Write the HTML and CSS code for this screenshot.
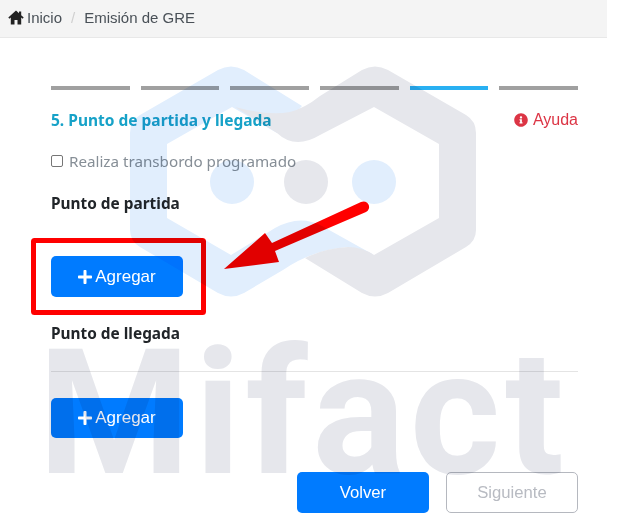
FILE: index.html
```html
<!DOCTYPE html>
<html lang="es">
<head>
  <meta charset="utf-8">
  <title>Emisión de GRE</title>
  <link rel="stylesheet" href="styles.css">
</head>
<body>
<div class="page">
  <nav class="crumbs">
    <svg class="crumbs__home" viewBox="0 0 16 15"><path d="M8 .6 L.3 7.6 L1.4 8.8 L2.8 7.6 V14.4 H6.5 V10 H9.5 V14.4 H13.2 V7.6 L14.6 8.8 L15.7 7.6 L13.2 5.3 V1.4 H11 V3.3 Z"/></svg>
    <span class="crumbs__link">Inicio</span>
    <span class="crumbs__sep">/</span>
    <span class="crumbs__current">Emisión de GRE</span>
  </nav>

  <main class="wizard">
    <div class="steps">
      <span class="steps__bar"></span>
      <span class="steps__bar"></span>
      <span class="steps__bar"></span>
      <span class="steps__bar"></span>
      <span class="steps__bar steps__bar--active"></span>
      <span class="steps__bar"></span>
    </div>

    <div class="wizard__head">
      <h2 class="wizard__title">5. Punto de partida y llegada</h2>
      <span class="help">
        <svg class="help__icon" viewBox="0 0 512 512"><path d="M256 8C119.043 8 8 119.083 8 256c0 136.997 111.043 248 248 248s248-111.003 248-248C504 119.083 392.957 8 256 8zm0 110c23.196 0 42 18.804 42 42s-18.804 42-42 42-42-18.804-42-42 18.804-42 42-42zm56 254c0 6.627-5.373 12-12 12h-88c-6.627 0-12-5.373-12-12v-24c0-6.627 5.373-12 12-12h12v-64h-12c-6.627 0-12-5.373-12-12v-24c0-6.627 5.373-12 12-12h64c6.627 0 12 5.373 12 12v100h12c6.627 0 12 5.373 12 12v24z"/></svg>
        Ayuda
      </span>
    </div>

    <label class="check">
      <span class="check__box"></span>
      Realiza transbordo programado
    </label>

    <h3 class="section section--from">Punto de partida</h3>
    <button class="btn btn--add btn--first">
      <svg class="btn__plus" viewBox="0 0 448 512"><path d="M416 208H272V64c0-17.67-14.33-32-32-32h-32c-17.67 0-32 14.33-32 32v144H32c-17.67 0-32 14.33-32 32v32c0 17.67 14.33 32 32 32h144v144c0 17.67 14.33 32 32 32h32c17.67 0 32-14.33 32-32V304h144c17.67 0 32-14.33 32-32v-32c0-17.67-14.33-32-32-32z"/></svg>
      Agregar
    </button>

    <h3 class="section section--to">Punto de llegada</h3>
    <hr class="rule">
    <button class="btn btn--add btn--second">
      <svg class="btn__plus" viewBox="0 0 448 512"><path d="M416 208H272V64c0-17.67-14.33-32-32-32h-32c-17.67 0-32 14.33-32 32v144H32c-17.67 0-32 14.33-32 32v32c0 17.67 14.33 32 32 32h144v144c0 17.67 14.33 32 32 32h32c17.67 0 32-14.33 32-32V304h144c17.67 0 32-14.33 32-32v-32c0-17.67-14.33-32-32-32z"/></svg>
      Agregar
    </button>

    <div class="wizard__foot">
      <button class="btn btn--nav">Volver</button>
      <button class="btn btn--nav btn--off">Siguiente</button>
    </div>
  </main>
</div>

<!-- red marks drawn on top of the screenshot -->
<svg class="layer" viewBox="0 0 625 529">
  <rect class="mark-box" x="33.5" y="240.5" width="170" height="72" rx="1"/>
  <path class="mark-arrow" d="M224 269 L265 233 L272 243 L361 202 A5.5 5.5 0 0 1 366 212 L275 251 L279 262 Z"/>
</svg>

<!-- watermark sits over everything, it tints what is below it -->
<svg class="layer watermark" viewBox="0 0 625 529">
  <path class="wm-blue" d="M302 106 L244 70 Q231 63 218 70 L140 115 Q130 121 130 133 L130 230 Q130 241 140 247 L218 293 Q231 300 244 293 L283 270 Q312 250 348 247 L374 255 L322 226 Q300 214 275 228 L231 255 L167 218 L167 144 L232 107 L277 133 Z"/>
  <path class="wm-grey" d="M235 107 Q268 116 290 112 Q305 108 320 96 L362 70 Q375 63 388 70 L466 115 Q476 121 476 133 L476 230 Q476 241 466 247 L388 293 Q375 300 362 293 L305 258 Q325 248 348 247 Q362 247 374 255 L439 218 L439 144 L374 107 L320 135 Q295 150 277 133 Z"/>
  <circle class="wm-blue" cx="232" cy="182" r="22"/>
  <circle class="wm-grey" cx="306" cy="182" r="22"/>
  <circle class="wm-blue" cx="374" cy="182" r="22"/>
  <text class="wm-text" x="38" y="473">Mifact</text>
</svg>
</body>
</html>
```

FILE: styles.css
```css
* {
  box-sizing: border-box;
}

body {
  margin: 0;
  background: #fff;
  font-family: "Liberation Sans", Arial, sans-serif;
}

.page {
  width: 607px;
}

/* Breadcrumb */
.crumbs {
  height: 38px;
  display: flex;
  align-items: center;
  padding-left: 8px;
  padding-bottom: 3px;
  background: #f4f4f4;
  border-bottom: 1px solid #e8e8e8;
  font-size: 15px;
  color: #495057;
}

.crumbs__home {
  width: 16px;
  height: 15px;
  margin-right: 3px;
  fill: #222;
}

.crumbs__sep {
  margin: 0 9px;
  color: #d0d0d0;
}

/* Wizard */
.wizard {
  padding: 48px 29px 0 51px;
}

.steps {
  display: grid;
  grid-template-columns: repeat(6, 1fr);
  gap: 11px;
}

.steps__bar {
  height: 4px;
  background: #a0a0a0;
}

.steps__bar--active {
  background: #29b0f2;
}

.wizard__head {
  display: flex;
  justify-content: space-between;
  align-items: center;
  margin-top: 19px;
  height: 22px;
}

.wizard__title {
  margin: 0;
  font: 700 15.5px "Noto Sans", sans-serif;
  color: #17a2c8;
}

.help {
  display: flex;
  align-items: center;
  gap: 5px;
  font-size: 16px;
  color: #dc3545;
}

.help__icon {
  width: 14px;
  height: 14px;
  fill: #dc3545;
}

.check {
  display: flex;
  align-items: center;
  gap: 6px;
  margin-top: 19px;
  height: 22px;
  font: 15.2px "Noto Sans", sans-serif;
  color: #868e96;
}

.check__box {
  width: 12px;
  height: 12px;
  border: 1px solid #767676;
  border-radius: 2px;
  background: #fff;
}

.section {
  margin: 0;
  height: 22px;
  font: 700 15.4px/22px "Noto Sans", sans-serif;
  color: #212529;
}

.section--from {
  margin-top: 21px;
}

.section--to {
  margin-top: 26px;
}

.rule {
  margin: 26px 0 0;
  border: 0;
  border-top: 1px solid #e4e4e4;
}

/* Buttons */
.btn {
  display: flex;
  align-items: center;
  justify-content: center;
  padding: 0;
  border: 0;
  border-radius: 5px;
  background: #007bff;
  color: #fff;
  font-family: "Liberation Sans", Arial, sans-serif;
}

.btn--add {
  width: 132px;
  font-size: 17px;
  gap: 3px;
}

.btn--first {
  height: 41px;
  margin-top: 41px;
}

.btn--second {
  height: 40px;
  margin-top: 26px;
}

.btn__plus {
  width: 14px;
  height: 16px;
  fill: #fff;
}

.btn--nav {
  width: 132px;
  height: 41px;
  font-size: 16.7px;
}

.btn--off {
  background: #fff;
  border: 1.5px solid #b5b8bf;
  color: #b8bbc2;
}

.wizard__foot {
  display: flex;
  justify-content: flex-end;
  gap: 17px;
  margin-top: 34px;
}

/* Overlays */
.layer {
  position: absolute;
  top: 0;
  left: 0;
  width: 625px;
  height: 529px;
  pointer-events: none;
}

.mark-box {
  fill: none;
  stroke: #f00;
  stroke-width: 5;
}

.mark-arrow {
  fill: #f00;
}

.watermark {
  mix-blend-mode: multiply;
}

.wm-blue {
  fill: #e1eefd;
}

.wm-grey,
.wm-text {
  fill: #e6e7ec;
}

.wm-text {
  font: 700 174px Roboto, sans-serif;
  letter-spacing: 4.5px;
}
```
